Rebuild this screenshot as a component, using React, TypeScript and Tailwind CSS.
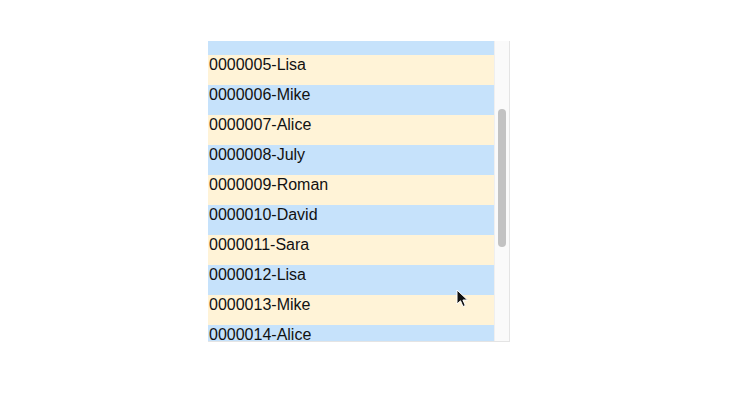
const NAMES = ["Lisa", "Mike", "Alice", "July", "Roman", "David", "Sara"];

// visible rows 0000005..0000014; row 0000004 is scrolled mostly out of view
const rows = Array.from({ length: 10 }, (_, i) => {
  const n = i + 5;
  return { id: String(n).padStart(7, "0"), name: NAMES[(n - 5) % 7], even: n % 2 === 0 };
});

function Cursor() {
  return (
    <svg className="absolute left-[456px] top-[289px]" width="14" height="20" viewBox="0 0 14 20">
      <path d="M1 1 L1 15 L4.5 11.8 L7 17.5 L9.3 16.5 L6.9 11 L11.5 11 Z" fill="#111" stroke="#fff" strokeWidth="1" strokeLinejoin="round" />
    </svg>
  );
}

export default function App() {
  return (
    <div className="relative w-[735px] h-[402px] bg-white" style={{ fontFamily: '"Liberation Sans", Arial, sans-serif' }}>
      <div className="ml-[208px] pt-[41px]">
        <div className="flex w-[302px] h-[301px] border-r border-b border-[#e4e4e4]">
          <div className="w-[286px] h-full overflow-hidden">
            <div className="h-[14px] bg-[#c6e2fb]" />
            {rows.map((r) => (
              <div
                key={r.id}
                className={`h-[30px] pl-px text-[16px] leading-[18px] pt-[1px] text-[#111] ${r.even ? "bg-[#c6e2fb]" : "bg-[#fff3d7]"}`}
              >
                {r.id}-{r.name}
              </div>
            ))}
          </div>
          <div className="w-[15px] h-full bg-[#fafafa] border-l border-[#efefef] flex justify-center">
            <div className="mt-[68px] w-[8px] h-[138px] rounded-full bg-[#c2c2c2]" />
          </div>
        </div>
      </div>
      <Cursor />
    </div>
  );
}
